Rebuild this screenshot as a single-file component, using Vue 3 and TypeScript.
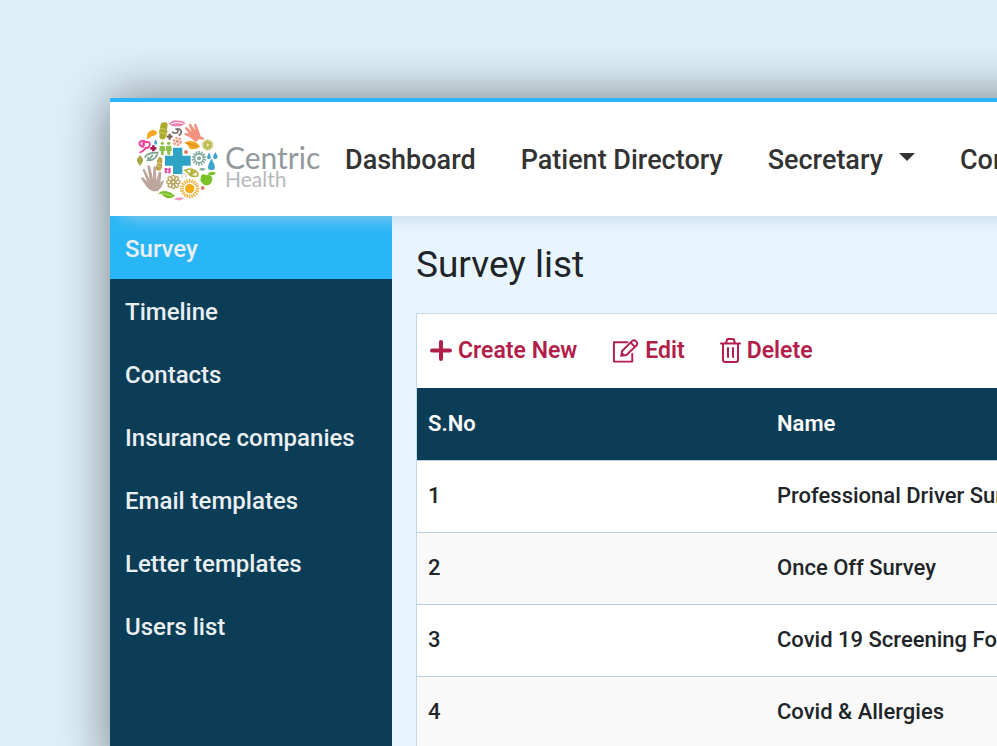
<script setup lang="ts">
import { ref } from 'vue'

interface Survey {
  id: number
  name: string
}

const menu: string[] = [
  'Survey',
  'Timeline',
  'Contacts',
  'Insurance companies',
  'Email templates',
  'Letter templates',
  'Users list',
]
const active = ref('Survey')

const surveys: Survey[] = [
  { id: 1, name: 'Professional Driver Survey' },
  { id: 2, name: 'Once Off Survey' },
  { id: 3, name: 'Covid 19 Screening Form' },
  { id: 4, name: 'Covid & Allergies' },
]

const rays = (n: number): number[] => Array.from({ length: n }, (_, i) => (i * 360) / n)
</script>

<template>
  <div class="page">
    <div class="frame">
      <header class="topbar">
        <a class="brand" href="#" aria-label="Centric Health">
          <svg class="emblem" viewBox="33 27 252 252" aria-hidden="true">
            <path d="M120 137h24v-24h28v24h25v30h-25v25h-28v-25h-24z" fill="#2fa3c4" />
            <!-- top arc -->
            <path d="M131 41q14-13 28-9 14-2 23 8-12 11-26 9-14 2-25-8z" fill="#ee82b0" />
            <path d="M138 41q18-6 37-1" stroke="#fff" stroke-width="3" fill="none" />
            <path d="M107 43q2-7 12-6 9 0 9 8l-2 12q4 10-2 18l-3 10q-4 5-12 3-8-3-5-13-5-9 0-16z" fill="#abab2c" />
            <path d="M105 55l20 4M104 68l20 3" stroke="#cfcf70" stroke-width="3" />
            <path d="M66 80q0-18 18-20 12 1 12 10-4 10-16 8-4 6-14 9z" fill="#f7a823" />
            <path d="M134 71v18M125 80h18" stroke="#806458" stroke-width="7" />
            <path d="M141 66q14 8 18-1 1-8-6-7M151 58q14-5 18 5 0 9-8 14" fill="none" stroke="#77706b" stroke-width="5" />
            <path d="M212 95q-7-3-13-10l-20-11q-3-5 4-6l10 3-13-15q-1-7 6-4l14 13-9-19q1-7 7-3l13 18-4-17q4-6 8 0l8 22 4 13 10 5q3 4-3 5l-12-1-5 5z" fill="#f29380" />
            <circle cx="157" cy="94" r="10" fill="none" stroke="#f0a08a" stroke-width="8" stroke-dasharray="7 3" />
            <circle cx="157" cy="94" r="4" fill="#d98267" />
            <!-- left side -->
            <path d="M55 110q-14-2-11-13 9-9 19 0 13-5 11 9-3 10-12 8-5 9-16 13M57 99q-6 3 0 6" fill="none" stroke="#ec4599" stroke-width="6" stroke-linecap="round" />
            <path d="M92 88q-9 16 0 16 9 0 0-16z" fill="#41a9cf" />
            <path d="M85 106v18M76 115h18" stroke="#a91c51" stroke-width="8" />
            <g fill="#8bc34a">
              <circle cx="112" cy="100" r="5" />
              <circle cx="131" cy="100" r="5" />
              <path d="M104 108h15l2 14-5 2v11h-8v-11l-5-2zM124 107h14l3 14-5 3v10h-9v-10l-5-3z" />
            </g>
            <path d="M59 143q8-16 39-15-4 20-22 23-9 0-6-10M65 152q12-4 18-18" fill="none" stroke="#7aa58c" stroke-width="5" />
            <path d="M45 136q17 14 0 31-17-15 0-31z" fill="#9b9b32" />
            <path d="M45 136v31" stroke="#c7c77d" stroke-width="2" />
            <path d="M104 140q10 4 8 14l-2 7q4 9-3 19-6 5-13-1-4-9 3-17-5-12 7-22z" fill="#bca346" />
            <path d="M97 158l12 3M96 167l11 3" stroke="#dacb90" stroke-width="3" />
            <path d="M84 244q-13-4-21-16l-15-23q0-5 6-3l13 13-14-34q1-8 7-2l14 30-7-39q4-8 9 0l8 38 1-36q5-7 8 1l1 39 7-25q6-5 8 2l-3 30 5-7q7-4 5 4l-7 16-11 12z" fill="#bda69c" />
            <!-- right side -->
            <path d="M177 98q17-9 34-2 11 6 14 14-16 11-31 6-4-13-17-18z" fill="#f5a623" />
            <path d="M184 100q18 2 35 10" stroke="#d8870b" stroke-width="3" fill="none" />
            <g stroke="#c3c260" stroke-width="4">
              <line v-for="a in rays(16)" :key="a" x1="248" y1="98" x2="248" y2="88" :transform="`rotate(${a} 248 105)`" />
            </g>
            <circle cx="248" cy="105" r="11" fill="#b9b747" />
            <circle cx="248" cy="105" r="5" fill="#e4e2a3" />
            <circle cx="183" cy="126" r="6" fill="#df8062" />
            <g stroke="#80aa99" stroke-width="5">
              <line v-for="a in rays(14)" :key="a" x1="222" y1="132" x2="222" y2="123" :transform="`rotate(${a} 222 145)`" />
            </g>
            <circle cx="222" cy="145" r="13" fill="none" stroke="#80aa99" stroke-width="4" />
            <circle cx="222" cy="145" r="6" fill="#80aa99" />
            <path d="M252 127q-11 21 0 21 11 0 0-21zM271 126q-14 21 0 21 14 0 0-21zM259 146q-20 34 0 34 21 0 0-34z" fill="#3fa5ca" />
            <path d="M222 178q10-8 20 0-10 8-20 0z" fill="#80aa99" />
            <path d="M176 182q22-10 34 0 11 5 8 16-19 4-26-6M183 182q16 21 31-1" fill="none" stroke="#b5b33c" stroke-width="5" />
            <circle cx="201" cy="185" r="6" fill="#b5b33c" />
            <path d="M172 204q-3-14 7-13 9 4 5 11" fill="none" stroke="#d5c6bd" stroke-width="3" />
            <path d="M229 195q9-5 15 1 14-3 18 8-1 20-14 22-15 2-22-15zM247 193q8-12 26-5-7 12-26 5z" fill="#79c225" />
            <circle cx="233" cy="234" r="6" fill="#e07d64" />
            <!-- bottom arc -->
            <path d="M119 174h7l3 3 4-3h4v16h-6l-3-3-4 3h-5z" fill="#e94aa4" />
            <circle cx="128" cy="182" r="3" fill="#fff" />
            <g fill="none" stroke="#bba965" stroke-width="4">
              <ellipse v-for="a in rays(8)" :key="a" cx="145" cy="203" rx="5" ry="7" :transform="`rotate(${a} 145 216)`" />
              <circle cx="145" cy="216" r="5" />
            </g>
            <g stroke="#efb750" stroke-width="5">
              <line v-for="a in rays(20)" :key="a" x1="194" y1="218" x2="194" y2="207" :transform="`rotate(${a} 194 236)`" />
            </g>
            <circle cx="194" cy="236" r="14" fill="#f4ab18" />
            <path d="M99 251q9-11 25-7 13 1 26 13-10 10-25 7-12-4-15-12z" fill="#7dbf2d" />
            <path d="M109 251q18 1 32 7" stroke="#b1dd71" stroke-width="3" fill="none" />
            <path d="M147 268q13-10 30-3-9 11-30 3z" fill="#f29bc0" />
          </svg>
          <span class="wordmark">
            <span class="word-main">Centric</span>
            <span class="word-sub">Health</span>
          </span>
        </a>
        <nav class="nav" aria-label="Main">
          <a href="#">Dashboard</a>
          <a href="#">Patient Directory</a>
          <a href="#" class="has-menu">Secretary <i class="caret"></i></a>
          <a href="#">Configuration</a>
        </nav>
      </header>

      <div class="body">
        <aside class="sidebar">
          <a
            v-for="item in menu"
            :key="item"
            href="#"
            :class="{ active: item === active }"
            @click.prevent="active = item"
          >{{ item }}</a>
        </aside>

        <main class="content">
          <h1>Survey list</h1>
          <section class="panel">
            <div class="toolbar">
              <button type="button">
                <svg width="22" height="24" viewBox="0 0 22 24" aria-hidden="true">
                  <path d="M11 3v17M2 11.500h18" stroke="currentColor" stroke-width="4" stroke-linecap="round" />
                </svg>
                Create New
              </button>
              <button type="button">
                <svg width="27" height="26" viewBox="0 0 28 26" fill="none" stroke="currentColor" stroke-width="2" stroke-linejoin="round" aria-hidden="true">
                  <path d="M16 4H2v20h19v-8" stroke-linecap="round" />
                  <path d="M9.500 18l1-5L21 2.500q2-1.500 4 0.500t0.500 4L15 17.200z" />
                  <path d="M19.500 4.500l4 4M10 17.500l2-2" />
                </svg>
                Edit
              </button>
              <button type="button">
                <svg width="21" height="26" viewBox="0 0 21 26" fill="none" stroke="currentColor" stroke-width="2" aria-hidden="true">
                  <path d="M1 5.500h19M3 6v16q0 2 2 2h11q2 0 2-2V6M6 5l1-3q0-1 1-1h5q1 0 1 1l1 3M8 10v9M13 10v9" stroke-linecap="round" />
                </svg>
                Delete
              </button>
            </div>
            <table>
              <thead>
                <tr>
                  <th scope="col" class="num">S.No</th>
                  <th scope="col">Name</th>
                </tr>
              </thead>
              <tbody>
                <tr v-for="s in surveys" :key="s.id">
                  <td>{{ s.id }}</td>
                  <td>{{ s.name }}</td>
                </tr>
              </tbody>
            </table>
          </section>
        </main>
      </div>
    </div>
  </div>
</template>

<style>
body {
  margin: 0;
  background: #deeff8;
}
</style>

<style scoped>
.page {
  box-sizing: border-box;
  height: 100vh;
  padding: 98px 0 0 110px;
  overflow: hidden;
  background: #deeff8;
  font-family: Roboto, "Liberation Sans", sans-serif;
  color: #212529;
}
.frame {
  display: flex;
  flex-direction: column;
  min-height: 100%;
  margin-right: -120px;
  margin-bottom: -120px;
  border-top: 4px solid #29b6f6;
  background: #e8f5fe;
  box-shadow: 0 0 48px rgba(0, 0, 0, 0.48);
}
.topbar {
  position: relative;
  z-index: 1;
  display: flex;
  align-items: center;
  height: 114px;
  padding-left: 26px;
  background: #fff;
  box-shadow: 0 12px 18px -12px rgba(183, 210, 229, 0.9);
}
.brand {
  display: flex;
  align-items: center;
  gap: 5px;
  width: 209px;
  flex: none;
  padding-top: 3px;
  text-decoration: none;
}
.emblem {
  width: 84px;
  height: 84px;
}
.wordmark {
  display: flex;
  flex-direction: column;
  padding-top: 12px;
  font-family: Lato, "Liberation Sans", sans-serif;
  font-weight: 400;
}
.word-main {
  font-size: 30px;
  line-height: 23px;
  color: #92999c;
}
.word-sub {
  font-size: 21px;
  line-height: 19px;
  color: #b6babc;
}
.nav {
  display: flex;
  gap: 45px;
  padding-top: 1px;
  white-space: nowrap;
}
.nav a {
  color: #333;
  font-size: 27px;
  font-weight: 500;
  line-height: 36px;
  text-decoration: none;
}
.has-menu {
  display: flex;
  align-items: center;
  gap: 16px;
}
.caret {
  border: 8px solid transparent;
  border-top-color: #333;
  border-bottom: 0;
  margin-bottom: 6px;
}
.body {
  display: flex;
  flex: 1;
}
.sidebar {
  flex: none;
  width: 282px;
  min-height: 530px;
  background: #0c3d56;
}
.sidebar a {
  display: block;
  padding: 3px 0 0 15px;
  color: #e9eff2;
  font-size: 24px;
  font-weight: 500;
  line-height: 60px;
  text-decoration: none;
}
.sidebar a.active {
  background: #29b6f6;
}
.content {
  flex: 1;
  padding: 24px;
}
h1 {
  margin: 0 0 23px;
  font-size: 37px;
  font-weight: 400;
  line-height: 50px;
}
.panel {
  border: 1px solid #c5d9e5;
  background: #fff;
}
.toolbar {
  display: flex;
  align-items: center;
  gap: 35px;
  height: 74px;
  padding-left: 13px;
}
.toolbar button {
  display: flex;
  align-items: center;
  gap: 6px;
  padding: 0;
  border: 0;
  background: none;
  color: #b21f4b;
  font: 600 23px/32px Roboto, "Liberation Sans", sans-serif;
}
table {
  width: 100%;
  table-layout: fixed;
  border-collapse: collapse;
  text-align: left;
  font-size: 22px;
  font-weight: 500;
  line-height: 30px;
}
th,
td {
  box-sizing: border-box;
  height: 72px;
  padding: 0 11px;
  white-space: nowrap;
}
td {
  border-top: 1px solid #b9d0de;
}
th {
  background: #0c3d56;
  color: #fff;
  font-weight: 600;
}
.num {
  width: 349px;
}
tbody tr:nth-child(even) {
  background: #f9f9f9;
}
</style>
